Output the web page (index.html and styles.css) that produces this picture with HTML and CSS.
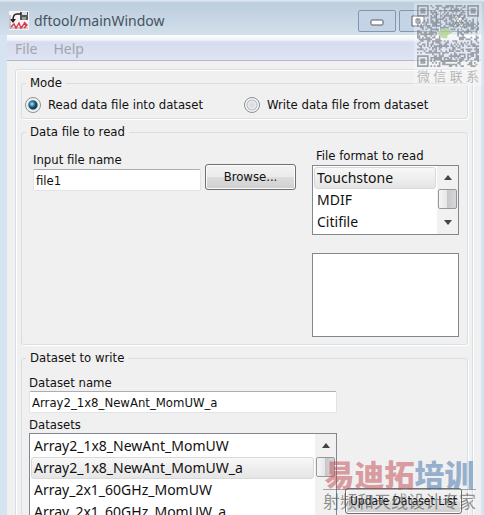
FILE: index.html
```html
<!DOCTYPE html>
<html lang="en">
<head>
    <meta charset="UTF-8">
    <meta name="viewport" content="width=device-width, initial-scale=1.0">
    <title>dftool/mainWindow</title>
    <link rel="stylesheet" href="styles.css">
</head>
<body>

    <div class="window">
        <header class="titlebar">
            <svg class="app-icon" viewBox="0 0 20 19">
                <rect width="20" height="19" fill="#f7f3f3"/>
                <rect x="11" y="1" width="8" height="8" fill="#555"/>
                <rect x="13" y="1" width="5" height="3" fill="#ddd"/>
                <rect x="13" y="6" width="4" height="3" fill="#999"/>
                <path d="M12 3H8Q4 3 4 9" fill="none" stroke="#222" stroke-width="1.5"/>
                <path d="M1 8h6l-3 4z" fill="#222"/>
                <path d="M1 4v14M1 17h18" fill="none" stroke="#999"/>
                <path d="M2 16l3-3 2 4 3-5 2 5 3-4 3 2M15 11l3 3-3 3" fill="none" stroke="#d8384a" stroke-width="1.4"/>
            </svg>
            <h1 class="title">dftool/mainWindow</h1>
            <div class="window-buttons">
                <button class="window-button" aria-label="Minimize">
                    <svg viewBox="0 0 14 14"><rect x="1" y="6" width="12" height="5" rx="1" fill="#fff" stroke="#555b66"/></svg>
                </button>
                <button class="window-button" aria-label="Maximize">
                    <svg viewBox="0 0 14 14"><path d="M1 2h12v10H1zM5 5h4v4H5z" fill="#fff" fill-rule="evenodd" stroke="#555b66"/></svg>
                </button>
                <button class="window-button" aria-label="Close">
                    <svg viewBox="0 0 14 14"><path d="M1 1h4l2 3 2-3h4L9 7l4 6H9l-2-3-2 3H1l4-6z" fill="#fff" stroke="#555b66"/></svg>
                </button>
            </div>
        </header>

        <nav class="menubar">
            <a href="#" class="menu-item">File</a>
            <a href="#" class="menu-item">Help</a>
        </nav>

        <main class="client">
            <div class="panel">
                <fieldset class="group mode">
                    <legend>Mode</legend>
                    <label class="radio"><input type="radio" name="mode" checked>Read data file into dataset</label>
                    <label class="radio"><input type="radio" name="mode">Write data file from dataset</label>
                </fieldset>

                <fieldset class="group source">
                    <legend>Data file to read</legend>
                    <div class="source-file">
                        <div class="field">
                            <label for="fileName">Input file name</label>
                            <input type="text" class="text-input" id="fileName" value="file1">
                        </div>
                        <button class="button">Browse...</button>
                    </div>
                    <div class="source-format">
                        <label for="format">File format to read</label>
                        <div class="listbox">
                            <select id="format" size="3">
                                <option selected>Touchstone</option>
                                <option>MDIF</option>
                                <option>Citifile</option>
                            </select>
                            <div class="scrollbar">
                                <span class="arrow up"></span>
                                <span class="thumb"></span>
                                <span class="arrow down"></span>
                            </div>
                        </div>
                        <textarea class="details" aria-label="Format details"></textarea>
                    </div>
                </fieldset>

                <fieldset class="group target">
                    <legend>Dataset to write</legend>
                    <div class="target-main">
                        <label for="datasetName">Dataset name</label>
                        <input type="text" class="text-input" id="datasetName" value="Array2_1x8_NewAnt_MomUW_a">
                        <label for="datasets" class="datasets-label">Datasets</label>
                        <div class="listbox">
                            <select id="datasets" size="8">
                                <option>Array2_1x8_NewAnt_MomUW</option>
                                <option selected>Array2_1x8_NewAnt_MomUW_a</option>
                                <option>Array_2x1_60GHz_MomUW</option>
                                <option>Array_2x1_60GHz_MomUW_a</option>
                            </select>
                            <div class="scrollbar">
                                <span class="arrow up"></span>
                                <span class="thumb"></span>
                                <span class="arrow down"></span>
                            </div>
                        </div>
                    </div>
                    <button class="button update">Update Dataset List</button>
                </fieldset>
            </div>
        </main>
    </div>

    <div class="contact">
        <svg class="qr" id="qr" viewBox="0 0 37 37"></svg>
        <div class="contact-text"><span>微</span><span>信</span><span>联</span><span>系</span></div>
    </div>

    <div class="brand">
        <div class="brand-name"><span>易迪拓</span>培训</div>
        <div class="brand-line">射频和天线设计专家</div>
    </div>

    <script src="script.js"></script>
</body>
</html>
```
FILE: styles.css
```css
* {
    box-sizing: border-box;
}

body {
    margin: 0;
    height: 100vh;
    overflow: hidden;
    position: relative;
    background: #d6e4f1;
    font-family: 'DejaVu Sans Condensed', 'DejaVu Sans', sans-serif;
    font-size: 13px;
    line-height: 14px;
    color: #111;
}

button, input, select, textarea {
    font: inherit;
    color: inherit;
    margin: 0;
}

.window {
    height: 100vh;
    overflow: hidden;
}

/* title bar */

.titlebar {
    display: flex;
    align-items: center;
    height: 35px;
    padding: 6px 6px 0 9px;
    background: linear-gradient(#e2eaf1 0, #bccddd 3px, #d3e0ec);
}

.app-icon {
    width: 20px;
    height: 19px;
}

.title {
    flex: 1;
    margin: 0 0 0 5px;
    font-family: 'Noto Sans', sans-serif;
    font-size: 14px;
    font-weight: normal;
    line-height: 20px;
    color: #465361;
}

.window-buttons {
    display: flex;
    gap: 3px;
}

.window-button {
    width: 38px;
    height: 22px;
    padding: 0;
    border: 1px solid #8296b0;
    border-radius: 2px;
    background: #c5d4e4;
}

.window-button svg {
    display: block;
    width: 14px;
    height: 14px;
    margin: auto;
}

/* menu */

.menubar {
    display: flex;
    gap: 16px;
    height: 26px;
    margin: 0 3px 0 7px;
    padding: 5px 8px;
    border-bottom: 1px solid #b4b9c8;
    background: linear-gradient(#fff 0, #f0f3fa 5px, #d7dcee 7px, #dee4f4);
}

.menu-item {
    font-family: 'Noto Sans', sans-serif;
    font-size: 14px;
    line-height: 18px;
    color: #a2a5ad;
    text-decoration: none;
}

/* client area */

.client {
    margin: 0 3px 0 7px;
    padding: 8px;
    background: #f0f0f0;
}

.panel {
    display: flex;
    flex-direction: column;
    gap: 6px;
    padding: 6px 4px 6px 5px;
    border: 1px solid #d5dfe5;
    border-radius: 3px;
    box-shadow: inset 1px 1px #fff, 1px 0 #fff;
}

.group {
    display: flex;
    min-width: 0;
    margin: 0;
    padding: 0 8px;
    border: 1px solid #d5dfe5;
    border-radius: 3px;
    box-shadow: 1px 1px #fff;
}

.group legend {
    margin-left: -4px;
    padding: 0 4px;
}

.mode {
    display: grid;
    grid-template-columns: 1fr 1fr;
    height: 43px;
    padding: 7px 4px 0 3px;
}

.mode legend {
    margin-left: 1px;
}

.radio {
    display: flex;
    align-items: center;
    gap: 7px;
}

.radio input {
    appearance: none;
    width: 16px;
    height: 16px;
    border: 1px solid #8a8f94;
    border-radius: 50%;
    background: radial-gradient(circle, #d4d8dc 0, #e8eaec 4px, #b8bcc0 5px, #f6f6f6 6px);
}

.radio input:checked {
    background: radial-gradient(circle at 6px 6px, #b9eafa 0, #3f93b4 2px, transparent 4px),
        radial-gradient(circle, #123f5a 0, #123f5a 4px, #cfd6dc 5px, #f6f6f6 6px);
}

.text-input {
    display: block;
    width: 100%;
    height: 22px;
    padding: 0 2px;
    border: 1px solid #e2e3ea;
    border-top-color: #abadb3;
    border-radius: 2px;
    background: #fff;
}

.button {
    height: 26px;
    padding: 0;
    border: 1px solid #707070;
    border-radius: 3px;
    background: linear-gradient(#f3f3f3, #ebebeb 50%, #dddddd 50%, #cfcfcf);
    box-shadow: inset 0 0 0 1px #fbfbfb;
}

/* data file */

.source {
    gap: 16px;
    height: 220px;
}

.source-file {
    flex: 1;
    display: flex;
    align-items: flex-start;
    gap: 4px;
    padding: 14px 0 0 3px;
}

.source-file .field {
    flex: 1;
    min-width: 0;
}

.source-file label {
    display: block;
    margin-bottom: 2px;
}

.source-file .button {
    width: 91px;
    margin-top: 11px;
}

.source-format {
    width: 147px;
    padding-top: 10px;
}

.source-format label {
    display: block;
    padding-left: 4px;
    margin-bottom: 2px;
}

.details {
    display: block;
    width: 100%;
    height: 84px;
    margin-top: 18px;
    border: 1px solid #828790;
    background: #fff;
    resize: none;
}

/* list boxes */

.listbox {
    display: flex;
    border: 1px solid #828790;
    background: #fff;
}

.listbox select {
    flex: 1;
    min-width: 0;
    padding: 1px;
    border: 0;
    outline: 0;
    background: none;
    overflow: hidden;
    scrollbar-width: none;
    font-family: 'Noto Sans', sans-serif;
    font-size: 14px;
}

.listbox option {
    height: 22px;
    min-height: 22px;
    padding: 0 2px;
    border: 1px solid transparent;
    border-radius: 3px;
    line-height: 20px;
}

.listbox option:checked {
    border-color: #d9d9d9;
    background: linear-gradient(#f8f8f8, #e5e5e5);
    color: #111;
}

.scrollbar {
    display: flex;
    flex-direction: column;
    align-items: center;
    width: 21px;
    padding: 9px 1px;
    background: #f1f1f1;
}

.arrow {
    border: 4px solid transparent;
}

.arrow.up {
    border-top: 0;
    border-bottom: 5px solid #444;
}

.arrow.down {
    margin-top: auto;
    border-bottom: 0;
    border-top: 5px solid #444;
}

.thumb {
    flex: none;
    width: 19px;
    height: 20px;
    margin-top: 9px;
    border: 1px solid #979797;
    border-radius: 2px;
    background: linear-gradient(90deg, #f5f5f5, #e6e6e6 50%, #c8c8cc 50%, #d8d8da);
}

/* dataset */

.target {
    gap: 8px;
    height: 320px;
    padding: 0 5px 0 7px;
}

.target legend {
    margin-left: -3px;
}

.target-main {
    flex: 1;
    min-width: 0;
    padding-top: 11px;
}

.target-main label {
    display: block;
    margin-bottom: 1px;
}

.target-main .datasets-label {
    margin-top: 5px;
}

.update {
    width: 117px;
    margin-top: 123px;
    font-size: 12px;
}

/* overlays */

.contact {
    position: absolute;
    top: 3px;
    right: 2px;
    width: 68px;
    padding: 2px 3px;
    background: rgba(255, 255, 255, 0.3);
    color: #b8b8b8;
    pointer-events: none;
}

.qr {
    display: block;
    width: 62px;
    height: 62px;
    opacity: 0.7;
}

.contact-text {
    display: flex;
    justify-content: space-between;
    margin-top: 1px;
    font-family: 'Noto Sans CJK SC', sans-serif;
    font-size: 13px;
    line-height: 16px;
}

.brand {
    position: absolute;
    right: 8px;
    bottom: 3px;
    font-family: 'Noto Sans CJK SC', sans-serif;
    text-align: center;
    white-space: nowrap;
    pointer-events: none;
}

.brand-name {
    border-bottom: 1px solid rgba(90, 90, 90, 0.5);
    font-size: 30px;
    font-weight: 900;
    line-height: 32px;
    color: rgba(60, 110, 170, 0.5);
}

.brand-name span {
    color: rgba(190, 70, 80, 0.5);
}

.brand-line {
    font-size: 17px;
    line-height: 22px;
    color: rgba(80, 80, 80, 0.6);
}
```
FILE: script.js
```js
const qr = document.getElementById('qr');
const size = 37;
let seed = 29;
let path = '';

function random() {
    seed = (seed * 16807) % 2147483647;
    return seed / 2147483647;
}

function inCorner(x, y) {
    return (x < 8 && y < 8) || (x > 28 && y < 8) || (x < 8 && y > 28);
}

for (let y = 0; y < size; y++) {
    for (let x = 0; x < size; x++) {
        const inLogo = x > 13 && x < 24 && y > 14 && y < 21;
        if (!inCorner(x, y) && !inLogo && random() < 0.5) {
            path += `M${x} ${y}h1v1h-1z`;
        }
    }
}

const finder = (x, y) => `M${x} ${y}h7v7h-7zM${x + 1} ${y + 1}v5h5v-5zM${x + 2} ${y + 2}h3v3h-3z`;
path += finder(0, 0) + finder(30, 0) + finder(0, 30);

qr.innerHTML = `<path d="${path}" fill="#7c828c"/>
    <ellipse cx="17" cy="17" rx="4" ry="3" fill="#a9cf86"/>
    <ellipse cx="21" cy="19" rx="3" ry="2" fill="#f4f6f4"/>`;
```
